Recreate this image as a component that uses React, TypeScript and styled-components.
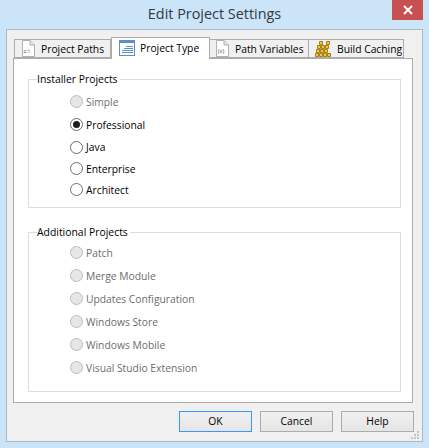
import { createGlobalStyle } from "styled-components";
import styled from "styled-components";

const GlobalStyle = createGlobalStyle`
  html, body {
    margin: 0;
    padding: 0;
    background: #cce4f7;
  }
  body {
    font-family: "Open Sans", "Liberation Sans", sans-serif;
    font-size: 10.3px;
    color: #000;
  }
`;

const Frame = styled.div`
  width: 429px;
  height: 448px;
  box-sizing: border-box;
  padding: 0 6px 6px 6px;
  display: flex;
  flex-direction: column;
  background: #cce4f7;
  overflow: hidden;
`;

const TitleBar = styled.div`
  height: 29px;
  flex: none;
  display: flex;
  align-items: flex-start;
  position: relative;
`;

const Title = styled.div`
  flex: 1;
  text-align: center;
  font-size: 14.4px;
  line-height: 28px;
  color: #2f3a45;
`;

const CloseButton = styled.div`
  position: absolute;
  right: 0;
  top: 0;
  width: 31px;
  height: 20px;
  background: #c75050;
  display: flex;
  align-items: center;
  justify-content: center;
`;

const Client = styled.div`
  flex: 1;
  box-sizing: border-box;
  background: #f0f0f0;
  border: 1px solid #a9b9c7;
  padding: 7px 9px 0 6px;
  display: flex;
  flex-direction: column;
  position: relative;
`;

const TabStrip = styled.div`
  display: flex;
  align-items: flex-end;
  height: 21px;
  padding-left: 2px;
  position: relative;
  z-index: 1;
`;

const Tab = styled.div<{ $active?: boolean; $width: number; $gap: number; $inset: number }>`
  box-sizing: border-box;
  width: ${(p) => p.$width}px;
  height: ${(p) => (p.$active ? 22 : 19)}px;
  margin-bottom: ${(p) => (p.$active ? -1 : 0)}px;
  background: ${(p) => (p.$active ? "#fff" : "#f0f0f0")};
  border: 1px solid #acacac;
  border-bottom: ${(p) => (p.$active ? "none" : "1px solid #acacac")};
  margin-left: ${(p) => (p.$active ? 0 : -1)}px;
  display: flex;
  align-items: center;
  gap: ${(p) => p.$gap}px;
  padding-left: ${(p) => p.$inset}px;
  padding-bottom: ${(p) => (p.$active ? 2 : 0)}px;
  font-size: 10.3px;
  white-space: nowrap;
  color: #000;
`;

const Panel = styled.div`
  box-sizing: border-box;
  width: 400px;
  height: 345px;
  background: #fff;
  border: 1px solid #acacac;
  padding: 13px 11px 0 14px;
  display: flex;
  flex-direction: column;
  gap: 17px;
`;

const GroupBox = styled.fieldset<{ $height: number; $top: number }>`
  margin: 0;
  padding: ${(p) => p.$top}px 0 0 41px;
  height: ${(p) => p.$height}px;
  box-sizing: border-box;
  border: 1px solid #dcdcdc;
  min-width: 0;
`;

const GroupTitle = styled.legend`
  margin-left: -33px;
  padding: 0 2px 0 0;
  font-size: 10.4px;
  line-height: 15px;
`;

const RadioRow = styled.div<{ $height: number; $disabled?: boolean }>`
  display: flex;
  align-items: center;
  gap: 3px;
  height: ${(p) => p.$height}px;
  color: ${(p) => (p.$disabled ? "#6d6d6d" : "#000")};
`;

const RadioCircle = styled.span<{ $disabled?: boolean }>`
  box-sizing: border-box;
  flex: none;
  width: 13px;
  height: 13px;
  border-radius: 50%;
  border: 1px solid ${(p) => (p.$disabled ? "#bcbcbc" : "#707070")};
  background: ${(p) => (p.$disabled ? "#e6e6e6" : "#fff")};
  display: flex;
  align-items: center;
  justify-content: center;
`;

const RadioDot = styled.span`
  width: 7px;
  height: 7px;
  border-radius: 50%;
  background: #1c1c1c;
`;

const ButtonBar = styled.div`
  display: flex;
  justify-content: flex-end;
  gap: 8px;
  margin-top: 8px;
  margin-right: -1px;
`;

const DialogButton = styled.div<{ $default?: boolean }>`
  box-sizing: border-box;
  width: 73px;
  height: 21px;
  border: 1px solid ${(p) => (p.$default ? "#3399ff" : "#acacac")};
  background: linear-gradient(#f0f0f0, #e5e5e5);
  display: flex;
  align-items: center;
  justify-content: center;
  line-height: 1;
`;

const Gripper = styled.svg`
  position: absolute;
  right: 3px;
  bottom: 2px;
`;

const PageIcon = ({ label }: { label: string }) => (
  <svg width="13" height="17" viewBox="0 0 13 17">
    <path d="M0.5 0.5H8L12.5 5V16.5H0.5Z" fill="#fff" stroke="#b0b0b0" />
    <path d="M8 0.5V5H12.5" fill="#e4e4e4" stroke="#b0b0b0" />
    <text x="1.5" y="12.5" fontSize="6" fontFamily="Liberation Sans" fill="#555">
      {label}
    </text>
  </svg>
);

const TableIcon = () => (
  <svg width="16" height="16" viewBox="0 0 16 16">
    <rect x="0.5" y="0.5" width="15" height="15" fill="#fff" stroke="#5b8fd0" />
    <rect x="0" y="0" width="16" height="3" fill="#5b8fd0" />
    <path
      d="M7 6.5H14M5 8.5H14M3 10.5H14M3 12.5H14"
      stroke="#5b8fd0"
      strokeWidth="1"
    />
  </svg>
);

const CacheIcon = () => (
  <svg width="16" height="16" viewBox="0 0 16 16">
    <path
      d="M4.5 0.5h3v3h-3zM11.5 0.5h3v3h-3zM2.5 4.5h3v3h-3zM6.5 4.5h3v3h-3zM10.5 4.5h3v3h-3zM1.5 8.5h3v3h-3zM5.5 8.5h3v3h-3zM9.5 8.5h3v3h-3zM0.5 12.5h3v3h-3zM4.5 12.5h3v3h-3zM8.5 12.5h3v3h-3zM12.5 12.5h3v3h-3z"
      fill="#f0c84a"
      stroke="#a87f12"
      strokeWidth="1"
    />
  </svg>
);

const installerProjects = [
  { label: "Simple", height: 23, disabled: true },
  { label: "Professional", height: 23, checked: true },
  { label: "Java", height: 22 },
  { label: "Enterprise", height: 21 },
  { label: "Architect", height: 21 },
];

const additionalProjects = [
  "Patch",
  "Merge Module",
  "Updates Configuration",
  "Windows Store",
  "Windows Mobile",
  "Visual Studio Extension",
];

export default function App() {
  return (
    <Frame>
      <GlobalStyle />
      <TitleBar>
        <Title>Edit Project Settings</Title>
        <CloseButton>
          <svg width="10" height="10" viewBox="0 0 10 10">
            <path d="M1 1L9 9M9 1L1 9" stroke="#fff" strokeWidth="2" />
          </svg>
        </CloseButton>
      </TitleBar>
      <Client>
        <TabStrip>
          <Tab $width={97} $gap={6} $inset={7}>
            <PageIcon label="c:\" />
            Project Paths
          </Tab>
          <Tab $active $width={99} $gap={5} $inset={7}>
            <TableIcon />
            Project Type
          </Tab>
          <Tab $width={100} $gap={6} $inset={6}>
            <PageIcon label="(x)" />
            Path Variables
          </Tab>
          <Tab $width={96} $gap={6} $inset={6}>
            <CacheIcon />
            Build Caching
          </Tab>
        </TabStrip>
        <Panel>
          <GroupBox $height={136} $top={3}>
            <GroupTitle>Installer Projects</GroupTitle>
            {installerProjects.map((p) => (
              <RadioRow key={p.label} $height={p.height} $disabled={p.disabled}>
                <RadioCircle $disabled={p.disabled}>
                  {p.checked && <RadioDot />}
                </RadioCircle>
                {p.label}
              </RadioRow>
            ))}
          </GroupBox>
          <GroupBox $height={167} $top={1}>
            <GroupTitle>Additional Projects</GroupTitle>
            {additionalProjects.map((label) => (
              <RadioRow key={label} $height={23} $disabled>
                <RadioCircle $disabled />
                {label}
              </RadioRow>
            ))}
          </GroupBox>
        </Panel>
        <ButtonBar>
          <DialogButton $default>OK</DialogButton>
          <DialogButton>Cancel</DialogButton>
          <DialogButton>Help</DialogButton>
        </ButtonBar>
        <Gripper width="8" height="8" viewBox="0 0 8 8">
          <path d="M6 0h2v2H6zM3 3h2v2H3zM6 3h2v2H6zM0 6h2v2H0zM3 6h2v2H3zM6 6h2v2H6z" fill="#c4c4c4" />
        </Gripper>
      </Client>
    </Frame>
  );
}
